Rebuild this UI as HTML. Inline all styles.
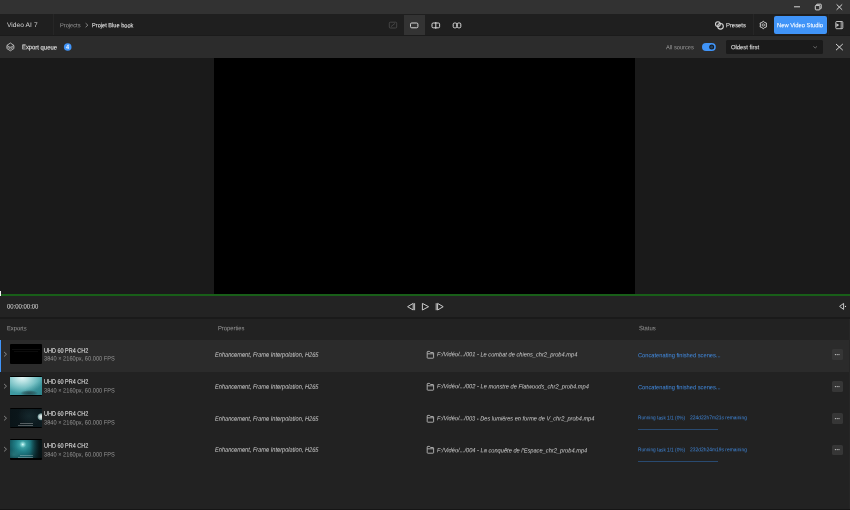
<!DOCTYPE html>
<html><head><meta charset="utf-8">
<style>
*{margin:0;padding:0;box-sizing:border-box}
html,body{width:850px;height:510px;overflow:hidden;background:#222222}
body{position:relative;font-family:"Liberation Sans",sans-serif;color:#ddd}
.a{position:absolute}
.t{position:absolute;white-space:nowrap;line-height:1;transform-origin:0 0;filter:brightness(1.001)}
svg{position:absolute;overflow:visible}
.more{width:10.5px;height:10.5px;background:#363636;border-radius:1.5px}
.t1{background:linear-gradient(90deg,transparent 5%,#181818 5%,#181818 95%,transparent 95%) 0 5.2px/100% 0.6px no-repeat,linear-gradient(90deg,transparent 11%,#141414 11%,#141414 89%,transparent 89%) 0 7.1px/100% 0.6px no-repeat,#000;border-radius:1px}
.t2{background:linear-gradient(#000 0,#000 1px,transparent 1px,transparent 19.2px,#000 19.2px),radial-gradient(ellipse 9px 3px at 60% 86%,rgba(40,70,75,.85) 0,rgba(40,70,75,.5) 60%,transparent 100%),linear-gradient(150deg,transparent 55%,rgba(30,110,118,.55) 100%),radial-gradient(ellipse 22px 16px at 38% 8%,#e4f6f6 0,#b4e0e1 30%,#6fbcc0 70%,#3f9aa2 100%);border-radius:1px}
.t3{background:linear-gradient(90deg,transparent 30%,rgba(230,230,230,.42) 30%,rgba(230,230,230,.42) 71%,transparent 71%) 0 15.6px/100% 0.8px no-repeat,linear-gradient(90deg,transparent 25%,rgba(230,230,230,.42) 25%,rgba(230,230,230,.42) 72%,transparent 72%) 0 17.5px/100% 0.8px no-repeat,linear-gradient(#000 0,#000 1.1px,transparent 1.1px,transparent 18.9px,#000 18.9px),radial-gradient(circle 4px at 97% 44%,#e8eeee 0,#c8d8d8 40%,#7a9c9c 75%,rgba(30,60,62,.6) 92%,transparent 100%),radial-gradient(ellipse 12px 10px at 60% 40%,rgba(30,55,60,.5),transparent),linear-gradient(90deg,#0a1418,#0d1b20);border-radius:1px}
.t4{background:linear-gradient(90deg,transparent 30%,rgba(220,230,230,.4) 30%,rgba(220,230,230,.4) 71%,transparent 71%) 0 15.6px/100% 0.8px no-repeat,linear-gradient(90deg,transparent 25%,rgba(220,230,230,.4) 25%,rgba(220,230,230,.4) 72%,transparent 72%) 0 17.5px/100% 0.8px no-repeat,linear-gradient(#000 0,#000 1px,transparent 1px,transparent 18.9px,#000 18.9px),linear-gradient(90deg,transparent 62%,rgba(6,14,16,.85) 92%),radial-gradient(ellipse 8px 6px at 12% 75%,rgba(60,150,150,.45),transparent),radial-gradient(circle 22px at 40% 26%,#e8ffff 0,#8fdada 1.2px,#3a9ea2 3.5px,#22828a 7px,#166068 12px,#0e4048 17px,#0a2a30 22px),#0a2a30;border-radius:1px}
</style></head><body>

<!-- title bar -->
<div class="a" style="left:0;top:0;width:850px;height:14px;background:#323232"></div>
<div class="a" style="left:0;top:13.5px;width:850px;height:1px;background:#1a1a1a"></div>
<svg style="left:0;top:0" width="850" height="14">
  <line x1="794" y1="6.8" x2="800" y2="6.8" stroke="#d6d6d6" stroke-width="1"/>
  <rect x="815.3" y="5.4" width="4.6" height="4.5" rx="0.8" fill="none" stroke="#d6d6d6" stroke-width="1"/>
  <path d="M816.6 5.2 V4.6 Q816.6 4.2 817 4.2 H820.8 Q821.2 4.2 821.2 4.6 V8.3 Q821.2 8.7 820.8 8.7 H820.2" fill="none" stroke="#d6d6d6" stroke-width="1"/>
  <path d="M836.6 4.4 L842.2 9.8 M842.2 4.4 L836.6 9.8" stroke="#d6d6d6" stroke-width="1"/>
</svg>

<!-- header -->
<div class="a" style="left:0;top:14px;width:850px;height:22px;background:#1f1f1f"></div>
<div class="a" style="left:53px;top:14px;width:1px;height:22px;background:#262626"></div>
<svg style="left:0;top:14px" width="850" height="22">
  <path d="M85.6 9.2 L87.9 11.2 L85.6 13.2" fill="none" stroke="#9a9a9a" stroke-width="0.8"/>
</svg>
<div class="a" style="left:404px;top:15px;width:21px;height:21px;background:#333333"></div>
<svg style="left:0;top:14px" width="850" height="22">
  <rect x="389.3" y="8.2" width="7.4" height="5.8" rx="1" fill="none" stroke="#4a4a4a" stroke-width="0.9"/>
  <path d="M391 12.6 L395 9.4" stroke="#4a4a4a" stroke-width="0.9"/>
  <rect x="410.5" y="9" width="7.4" height="4.8" rx="1.2" fill="none" stroke="#d6d6d6" stroke-width="1"/>
  <rect x="432" y="9" width="7.6" height="4.8" rx="1.2" fill="none" stroke="#d6d6d6" stroke-width="1"/>
  <line x1="435.8" y1="8" x2="435.8" y2="14.8" stroke="#d6d6d6" stroke-width="1"/>
  <rect x="453.2" y="9" width="3.6" height="4.8" rx="1.2" fill="none" stroke="#d6d6d6" stroke-width="1"/>
  <rect x="457.2" y="9" width="3.6" height="4.8" rx="1.2" fill="none" stroke="#d6d6d6" stroke-width="1"/>
  <circle cx="717.9" cy="10.1" r="2.4" fill="none" stroke="#d6d6d6" stroke-width="1.1"/>
  <circle cx="720.5" cy="12.3" r="2.8" fill="none" stroke="#d6d6d6" stroke-width="1.1"/>
  <path d="M763.30 7.30 L764.75 8.49 L766.50 9.15 L766.20 11.00 L766.50 12.85 L764.75 13.51 L763.30 14.70 L761.85 13.51 L760.10 12.85 L760.40 11.00 L760.10 9.15 L761.85 8.49 Z" fill="none" stroke="#d6d6d6" stroke-width="1" stroke-linejoin="round"/>
  <circle cx="763.3" cy="11" r="1.2" fill="none" stroke="#bdbdbd" stroke-width="0.9"/>
  <rect x="835.8" y="7.5" width="7" height="7.2" rx="0.9" fill="none" stroke="#d0d0d0" stroke-width="0.9"/>
  <line x1="841.2" y1="7.5" x2="841.2" y2="14.7" stroke="#d0d0d0" stroke-width="0.8"/>
  <path d="M836.4 9.3 L839.2 11.1 L836.4 12.9 Z" fill="#c8c8c8"/>
</svg>
<div class="a" style="left:752.5px;top:14px;width:1px;height:22px;background:#262626"></div>
<div class="a" style="left:774px;top:16px;width:53px;height:18px;background:#4094f8;border-radius:2px"></div>
<div class="a" style="left:828px;top:14px;width:1px;height:22px;background:#262626"></div>

<!-- export queue bar -->
<div class="a" style="left:0;top:36px;width:850px;height:22px;background:#2c2c2c"></div>
<div class="a" style="left:0;top:35.4px;width:850px;height:1px;background:#1b1b1b"></div>
<svg style="left:0;top:36px" width="850" height="22">
  <path d="M10.4 7 L13.9 9.4 L10.4 11.6 L6.9 9.4 Z" fill="none" stroke="#cfcfcf" stroke-width="0.8" stroke-linejoin="round"/>
  <path d="M6.9 9.6 V12.6 L10.4 14.8 L13.9 12.6 V9.6" fill="none" stroke="#cfcfcf" stroke-width="0.8" stroke-linejoin="round"/>
  <path d="M7.2 11.2 L10.4 13.2 L13.6 11.2" fill="none" stroke="#b8b8b8" stroke-width="0.7"/>
  <path d="M8.4 12.2 L10.4 10.9 L12.4 12.2" fill="none" stroke="#9a9a9a" stroke-width="0.6"/>
  <circle cx="67.7" cy="11" r="3.8" fill="#4094f8"/>
  <path d="M68.2 8.8 L66.2 11.8 H69 M68.2 8.8 V13" fill="none" stroke="#ffffff" stroke-width="0.7"/>
  <rect x="702" y="7" width="13.8" height="8" rx="4" fill="#4094f8"/>
  <circle cx="711.7" cy="10.9" r="2.5" fill="#151b22"/>
  <circle cx="711.7" cy="10.9" r="1.5" fill="#23405e"/>
  <path d="M836 8 L842.8 14.2 M842.8 8 L836 14.2" stroke="#d6d6d6" stroke-width="1"/>
</svg>
<div class="a" style="left:726px;top:40px;width:96.5px;height:13.8px;background:#1a1a1a;border-radius:1.5px"></div>
<svg style="left:0;top:36px" width="850" height="22">
  <path d="M813.4 10.4 L815.2 12 L817 10.4" fill="none" stroke="#888" stroke-width="0.7"/>
</svg>

<!-- video area -->
<div class="a" style="left:0;top:58px;width:850px;height:236px;background:#1a1a1a"></div>
<div class="a" style="left:214.3px;top:58px;width:420.9px;height:236px;background:#000"></div>
<div class="a" style="left:0;top:294px;width:850px;height:2px;background:#185e18"></div>
<div class="a" style="left:0;top:290.5px;width:1.3px;height:8.5px;background:#f0f0f0"></div>

<!-- controls bar -->
<div class="a" style="left:0;top:296px;width:850px;height:21px;background:#232323"></div>
<div class="a" style="left:0;top:317px;width:850px;height:1.5px;background:#1a1a1a"></div>
<svg style="left:0;top:296px" width="850" height="22">
  <path d="M413.2 7.4 L407.6 10.7 L413.2 14 Z" fill="none" stroke="#cccccc" stroke-width="1" stroke-linejoin="round"/>
  <line x1="414.6" y1="7.2" x2="414.6" y2="14.2" stroke="#bdbdbd" stroke-width="1"/>
  <path d="M422.4 7.4 L428.6 10.7 L422.4 14 Z" fill="none" stroke="#cccccc" stroke-width="1" stroke-linejoin="round"/>
  <line x1="436.2" y1="7.2" x2="436.2" y2="14.2" stroke="#bdbdbd" stroke-width="1"/>
  <path d="M437.6 7.4 L443.2 10.7 L437.6 14 Z" fill="none" stroke="#cccccc" stroke-width="1" stroke-linejoin="round"/>
  <path d="M843.6 7.4 L839.6 10.4 L843.6 13.4 Z" fill="none" stroke="#c8c8c8" stroke-width="1" stroke-linejoin="round"/>
  <circle cx="845.5" cy="10.4" r="0.6" fill="#e0e0e0"/>
</svg>
<div class="a" style="left:0;top:340.0px;width:849px;height:31.8px;background:#2b2b2b"></div>
<div class="a" style="left:0;top:340.0px;width:1.3px;height:31.8px;background:#4094f8"></div>
<div class="a t1" style="left:10px;top:344.0px;width:31.7px;height:20.4px"></div>
<div class="a more" style="left:832px;top:349.40px"></div>
<svg style="left:0;top:340.0px" width="850" height="32"><path d="M4.1 12 L6.5 14.2 L4.1 16.4" fill="none" stroke="#9c9c9c" stroke-width="0.8"/><path d="M427.8 11.4 H429.6 L430.6 12.5 H433 Q433.6 12.5 433.6 13.1 V17.6 Q433.6 18.2 433 18.2 H427.8 Q427.2 18.2 427.2 17.6 V12 Q427.2 11.4 427.8 11.4 Z M427.4 13.8 H433.4" fill="none" stroke="#c8c8c8" stroke-width="0.8" stroke-linejoin="round"/><circle cx="835.4" cy="14.6" r="0.6" fill="#d0d0d0"/><circle cx="837.2" cy="14.6" r="0.6" fill="#d0d0d0"/><circle cx="839" cy="14.6" r="0.6" fill="#d0d0d0"/></svg>
<div class="a t2" style="left:10px;top:375.8px;width:31.7px;height:20.4px"></div>
<div class="a more" style="left:832px;top:381.20px"></div>
<svg style="left:0;top:371.8px" width="850" height="32"><path d="M4.1 12 L6.5 14.2 L4.1 16.4" fill="none" stroke="#9c9c9c" stroke-width="0.8"/><path d="M427.8 11.4 H429.6 L430.6 12.5 H433 Q433.6 12.5 433.6 13.1 V17.6 Q433.6 18.2 433 18.2 H427.8 Q427.2 18.2 427.2 17.6 V12 Q427.2 11.4 427.8 11.4 Z M427.4 13.8 H433.4" fill="none" stroke="#c8c8c8" stroke-width="0.8" stroke-linejoin="round"/><circle cx="835.4" cy="14.6" r="0.6" fill="#d0d0d0"/><circle cx="837.2" cy="14.6" r="0.6" fill="#d0d0d0"/><circle cx="839" cy="14.6" r="0.6" fill="#d0d0d0"/></svg>
<div class="a t3" style="left:10px;top:407.6px;width:31.7px;height:20.4px"></div>
<div class="a" style="left:638px;top:429.20px;width:80px;height:1px;background:#294a70"></div>
<div class="a more" style="left:832px;top:413.00px"></div>
<svg style="left:0;top:403.6px" width="850" height="32"><path d="M4.1 12 L6.5 14.2 L4.1 16.4" fill="none" stroke="#9c9c9c" stroke-width="0.8"/><path d="M427.8 11.4 H429.6 L430.6 12.5 H433 Q433.6 12.5 433.6 13.1 V17.6 Q433.6 18.2 433 18.2 H427.8 Q427.2 18.2 427.2 17.6 V12 Q427.2 11.4 427.8 11.4 Z M427.4 13.8 H433.4" fill="none" stroke="#c8c8c8" stroke-width="0.8" stroke-linejoin="round"/><circle cx="835.4" cy="14.6" r="0.6" fill="#d0d0d0"/><circle cx="837.2" cy="14.6" r="0.6" fill="#d0d0d0"/><circle cx="839" cy="14.6" r="0.6" fill="#d0d0d0"/></svg>
<div class="a t4" style="left:10px;top:439.4px;width:31.7px;height:20.4px"></div>
<div class="a" style="left:638px;top:461.00px;width:80px;height:1px;background:#294a70"></div>
<div class="a more" style="left:832px;top:444.80px"></div>
<svg style="left:0;top:435.4px" width="850" height="32"><path d="M4.1 12 L6.5 14.2 L4.1 16.4" fill="none" stroke="#9c9c9c" stroke-width="0.8"/><path d="M427.8 11.4 H429.6 L430.6 12.5 H433 Q433.6 12.5 433.6 13.1 V17.6 Q433.6 18.2 433 18.2 H427.8 Q427.2 18.2 427.2 17.6 V12 Q427.2 11.4 427.8 11.4 Z M427.4 13.8 H433.4" fill="none" stroke="#c8c8c8" stroke-width="0.8" stroke-linejoin="round"/><circle cx="835.4" cy="14.6" r="0.6" fill="#d0d0d0"/><circle cx="837.2" cy="14.6" r="0.6" fill="#d0d0d0"/><circle cx="839" cy="14.6" r="0.6" fill="#d0d0d0"/></svg>
<div class="a" style="left:848.6px;top:318.5px;width:1.4px;height:191px;background:#262626"></div>
<div class="a" style="left:0;top:509px;width:850px;height:1px;background:#151515"></div>
<div class="t" style="left:6.57px;top:22.42px;font-size:6.600px;color:#d6d6d6;letter-spacing:0.049px;transform:scaleY(1.0000) rotate(0.1deg)">Video AI</div>
<div class="t" style="left:33.77px;top:22.42px;font-size:6.600px;color:#d6d6d6;letter-spacing:0.322px;transform:scaleY(1.0000) rotate(0.1deg)">7</div>
<div class="t" style="left:59.72px;top:22.59px;font-size:5.674px;color:#9a9a9a;letter-spacing:0.010px;transform:scaleY(1.0574) rotate(0.1deg)">Projects</div>
<div class="t" style="left:92.32px;top:22.58px;font-size:5.648px;color:#ececec;letter-spacing:0.008px;transform:scaleY(1.0799) rotate(0.1deg);-webkit-text-stroke:0.05px #ececec">Projet Blue book</div>
<div class="t" style="left:726.21px;top:22.58px;font-size:5.881px;color:#e6e6e6;letter-spacing:0.001px;transform:scaleY(1.0373) rotate(0.1deg);-webkit-text-stroke:0.08px #e6e6e6">Presets</div>
<div class="t" style="left:777.21px;top:22.68px;font-size:5.807px;color:#ffffff;letter-spacing:0.003px;transform:scaleY(1.0504) rotate(0.1deg);-webkit-text-stroke:0.08px #ffffff">New Video Studio</div>
<div class="t" style="left:21.51px;top:44.55px;font-size:5.878px;color:#e4e4e4;letter-spacing:0.006px;transform:scaleY(1.0888) rotate(0.1deg);-webkit-text-stroke:0.1px #e4e4e4">Export queue</div>
<div class="t" style="left:665.52px;top:44.70px;font-size:5.687px;color:#9a9a9a;letter-spacing:0.006px;transform:scaleY(1.0551) rotate(0.1deg)">All sources</div>
<div class="t" style="left:731.21px;top:44.68px;font-size:5.870px;color:#e0e0e0;letter-spacing:0.001px;transform:scaleY(1.0391) rotate(0.1deg);-webkit-text-stroke:0.08px #e0e0e0">Oldest first</div>
<div class="t" style="left:6.90px;top:303.62px;font-size:5.954px;color:#e0e0e0;letter-spacing:0.006px;transform:scaleY(1.1084) rotate(0.1deg)">00:00:00:00</div>
<div class="t" style="left:6.71px;top:326.26px;font-size:5.787px;color:#999999;letter-spacing:0.012px;transform:scaleY(1.0886) rotate(0.1deg)">Exports</div>
<div class="t" style="left:217.51px;top:326.26px;font-size:5.822px;color:#999999;letter-spacing:0.003px;transform:scaleY(1.0822) rotate(0.1deg)">Properties</div>
<div class="t" style="left:638.50px;top:326.26px;font-size:5.902px;color:#999999;letter-spacing:0.006px;transform:scaleY(1.0674) rotate(0.1deg)">Status</div>
<div class="t" style="left:43.92px;top:347.55px;font-size:5.505px;color:#e8e8e8;letter-spacing:-0.003px;transform:scaleY(1.1626) rotate(0.1deg);-webkit-text-stroke:0.03px #e8e8e8">UHD 60 PR4 CH2</div>
<div class="t" style="left:44.22px;top:356.16px;font-size:5.675px;color:#939393;letter-spacing:0.008px;transform:scaleY(1.1101) rotate(0.1deg)">3840 × 2160px, 60.000 FPS</div>
<div class="t" style="left:215.22px;top:351.92px;font-size:5.642px;color:#cacaca;letter-spacing:0.006px;transform:scaleY(1.1698) rotate(0.1deg);font-style:italic;-webkit-text-stroke:0.02px #cacaca">Enhancement, Frame Interpolation, H265</div>
<div class="t" style="left:437.32px;top:352.18px;font-size:5.682px;color:#c8c8c8;letter-spacing:0.002px;transform:scaleY(1.0736) rotate(0.1deg);font-style:italic;-webkit-text-stroke:0.02px #c8c8c8">F:/Vidéo/.../001 - Le combat de chiens_chr2_prob4.mp4</div>
<div class="t" style="left:637.51px;top:352.89px;font-size:5.715px;color:#4189de;letter-spacing:0.006px;transform:scaleY(1.0499) rotate(0.1deg);-webkit-text-stroke:0.02px #4189de">Concatenating finished scenes...</div>
<div class="t" style="left:43.92px;top:379.35px;font-size:5.505px;color:#e8e8e8;letter-spacing:-0.003px;transform:scaleY(1.1626) rotate(0.1deg);-webkit-text-stroke:0.03px #e8e8e8">UHD 60 PR4 CH2</div>
<div class="t" style="left:44.22px;top:387.96px;font-size:5.675px;color:#939393;letter-spacing:0.008px;transform:scaleY(1.1101) rotate(0.1deg)">3840 × 2160px, 60.000 FPS</div>
<div class="t" style="left:215.22px;top:383.72px;font-size:5.642px;color:#cacaca;letter-spacing:0.006px;transform:scaleY(1.1698) rotate(0.1deg);font-style:italic;-webkit-text-stroke:0.02px #cacaca">Enhancement, Frame Interpolation, H265</div>
<div class="t" style="left:437.32px;top:383.98px;font-size:5.691px;color:#c8c8c8;letter-spacing:-0.001px;transform:scaleY(1.0719) rotate(0.1deg);font-style:italic;-webkit-text-stroke:0.02px #c8c8c8">F:/Vidéo/.../002 - Le monstre de Flatwoods_chr2_prob4.mp4</div>
<div class="t" style="left:637.51px;top:384.69px;font-size:5.715px;color:#4189de;letter-spacing:0.006px;transform:scaleY(1.0499) rotate(0.1deg);-webkit-text-stroke:0.02px #4189de">Concatenating finished scenes...</div>
<div class="t" style="left:43.92px;top:411.15px;font-size:5.505px;color:#e8e8e8;letter-spacing:-0.003px;transform:scaleY(1.1626) rotate(0.1deg);-webkit-text-stroke:0.03px #e8e8e8">UHD 60 PR4 CH2</div>
<div class="t" style="left:44.22px;top:419.76px;font-size:5.675px;color:#939393;letter-spacing:0.008px;transform:scaleY(1.1101) rotate(0.1deg)">3840 × 2160px, 60.000 FPS</div>
<div class="t" style="left:215.22px;top:415.52px;font-size:5.642px;color:#cacaca;letter-spacing:0.006px;transform:scaleY(1.1698) rotate(0.1deg);font-style:italic;-webkit-text-stroke:0.02px #cacaca">Enhancement, Frame Interpolation, H265</div>
<div class="t" style="left:437.32px;top:415.78px;font-size:5.650px;color:#c8c8c8;letter-spacing:0.002px;transform:scaleY(1.0796) rotate(0.1deg);font-style:italic;-webkit-text-stroke:0.02px #c8c8c8">F:/Vidéo/.../003 - Des lumières en forme de V_chr2_prob4.mp4</div>
<div class="t" style="left:637.76px;top:415.98px;font-size:4.765px;color:#3e85d8;letter-spacing:0.006px;transform:scaleY(1.1123) rotate(0.1deg)">Running task 1/1 (0%)</div>
<div class="t" style="left:689.75px;top:415.98px;font-size:4.926px;color:#3e85d8;letter-spacing:0.010px;transform:scaleY(1.0759) rotate(0.1deg)">224d22h7m21s remaining</div>
<div class="t" style="left:43.92px;top:442.95px;font-size:5.505px;color:#e8e8e8;letter-spacing:-0.003px;transform:scaleY(1.1626) rotate(0.1deg);-webkit-text-stroke:0.03px #e8e8e8">UHD 60 PR4 CH2</div>
<div class="t" style="left:44.22px;top:451.56px;font-size:5.675px;color:#939393;letter-spacing:0.008px;transform:scaleY(1.1101) rotate(0.1deg)">3840 × 2160px, 60.000 FPS</div>
<div class="t" style="left:215.22px;top:447.32px;font-size:5.642px;color:#cacaca;letter-spacing:0.006px;transform:scaleY(1.1698) rotate(0.1deg);font-style:italic;-webkit-text-stroke:0.02px #cacaca">Enhancement, Frame Interpolation, H265</div>
<div class="t" style="left:437.32px;top:447.58px;font-size:5.693px;color:#c8c8c8;letter-spacing:-0.000px;transform:scaleY(1.0715) rotate(0.1deg);font-style:italic;-webkit-text-stroke:0.02px #c8c8c8">F:/Vidéo/.../004 - La conquête de l'Espace_chr2_prob4.mp4</div>
<div class="t" style="left:637.76px;top:447.78px;font-size:4.765px;color:#3e85d8;letter-spacing:0.006px;transform:scaleY(1.1123) rotate(0.1deg)">Running task 1/1 (0%)</div>
<div class="t" style="left:689.75px;top:447.78px;font-size:4.926px;color:#3e85d8;letter-spacing:0.010px;transform:scaleY(1.0759) rotate(0.1deg)">232d2h24m19s remaining</div>
</body></html>
